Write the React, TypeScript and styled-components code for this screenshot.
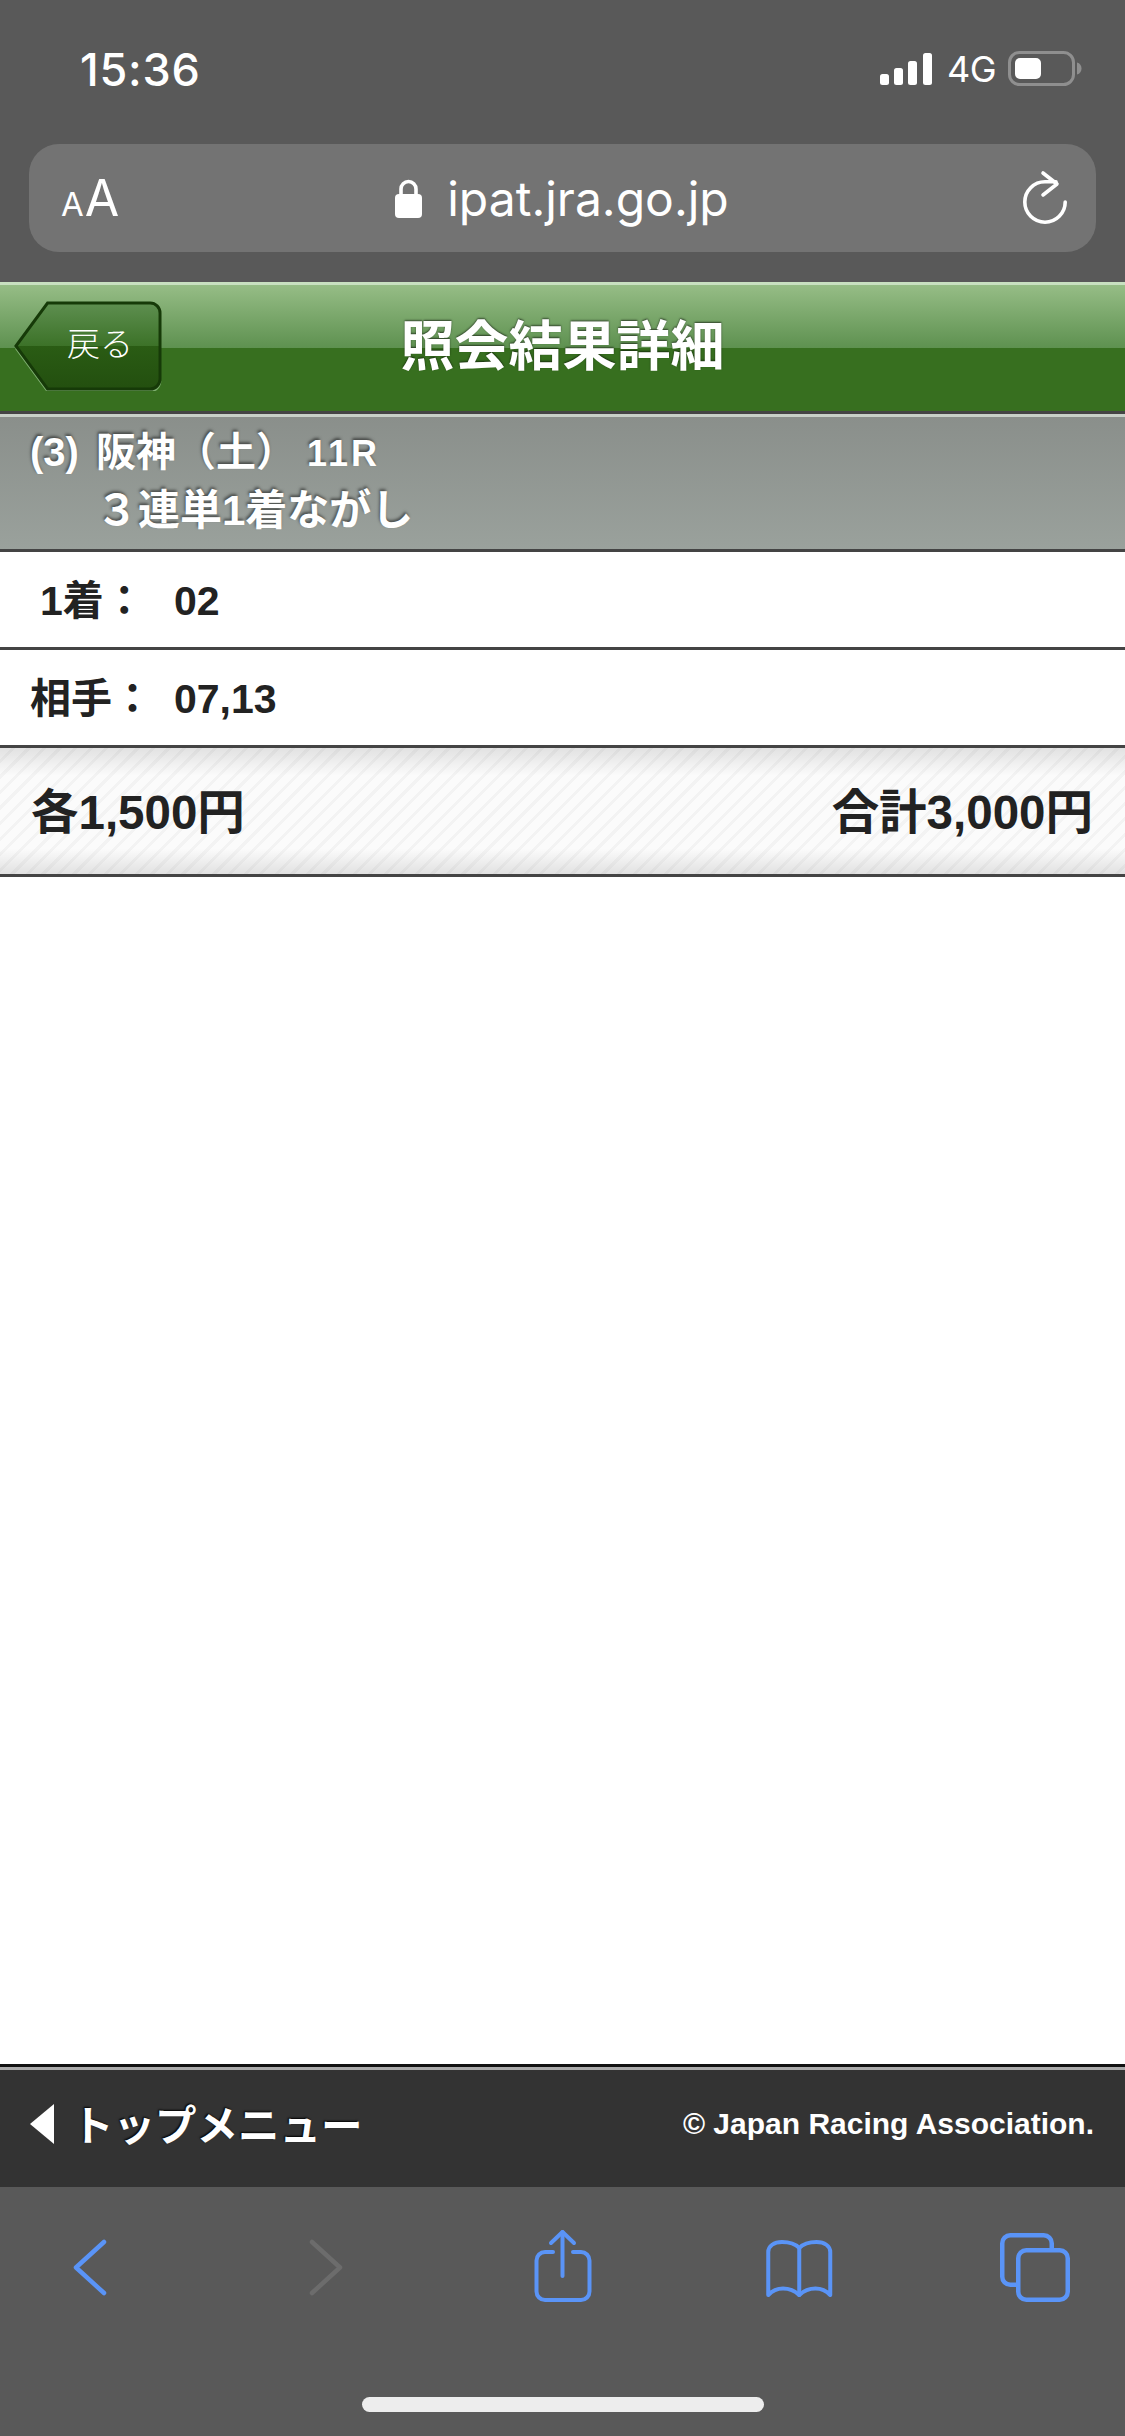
import React from 'react';
import styled, { createGlobalStyle } from 'styled-components';

const GOTHIC = `"Liberation Sans", "Noto Sans CJK JP", sans-serif`;
const SYSTEM = `Inter, "Liberation Sans", sans-serif`;
const BLUE = '#5a94f7';

const GlobalStyle = createGlobalStyle`
	html,
	body {
		margin: 0;
		padding: 0;
		background: #fff;
	}
	* {
		box-sizing: border-box;
	}
`;

const SignalIcon = () => (
	<svg width="52" height="32" viewBox="0 0 52 32" fill="#fff">
		<rect x="0" y="21" width="9" height="11" rx="2.5" />
		<rect x="14" y="15" width="9" height="17" rx="2.5" />
		<rect x="28" y="8" width="9" height="24" rx="2.5" />
		<rect x="43" y="0" width="9" height="32" rx="2.5" />
	</svg>
);

const BatteryIcon = () => (
	<svg width="74" height="36" viewBox="0 0 74 36">
		<rect x="1.5" y="1.5" width="64" height="32" rx="10" fill="none" stroke="#8f8f8f" strokeWidth="3" />
		<rect x="7" y="7" width="26" height="21" rx="5" fill="#fff" />
		<path d="M69 11.5c3 .8 4.5 3 4.5 6s-1.500 5.200-4.500 6z" fill="#8f8f8f" />
	</svg>
);

const LockIcon = () => (
	<svg width="27" height="39" viewBox="0 0 27 39" fill="#fff">
		<path d="M6 17V10a7.500 7.500 0 0 1 15 0v7" fill="none" stroke="#fff" strokeWidth="3.600" />
		<rect x="0" y="15" width="27" height="24" rx="4" />
	</svg>
);

const ReloadIcon = () => (
	<svg width="48" height="56" viewBox="0 0 48 56" fill="none" stroke="#fff" strokeWidth="3.600" strokeLinecap="round" strokeLinejoin="round">
		<path d="M42.200 32A20.200 20.200 0 1 1 22 11.800H33" />
		<path d="M20 3l14 11-14 11" />
	</svg>
);

const BackArrow = () => (
	<ToolSvg viewBox="0 0 70 76" stroke={BLUE} strokeWidth="4.500">
		<path d="M49 14L21 39.500 49 65" />
	</ToolSvg>
);

const ForwardArrow = () => (
	<ToolSvg viewBox="0 0 70 76" stroke="#6c6c6c" strokeWidth="4.500">
		<path d="M21 14l28 25.500L21 65" />
	</ToolSvg>
);

const ShareIcon = () => (
	<ToolSvg viewBox="0 0 70 76" stroke={BLUE} strokeWidth="4">
		<path d="M25 24h-8a8.500 8.500 0 0 0-8.500 8.500v31a8.500 8.500 0 0 0 8.500 8.500h36a8.500 8.500 0 0 0 8.500-8.500v-31a8.500 8.500 0 0 0-8.500-8.500h-8" />
		<path d="M34.500 4v44" />
		<path d="M23 15L34.500 4 46 15" />
	</ToolSvg>
);

const BookIcon = () => (
	<ToolSvg viewBox="0 0 70 76" stroke={BLUE} strokeWidth="4">
		<path d="M35.250 20C31 15.500 25 14 18 14 10 14 4.250 18 4.250 24v43C9 62 13 60.500 19 60.500c6 0 12 2.500 16.250 6.500 4.250-4 10.250-6.500 16.250-6.500 6 0 10 1.500 14.750 6.500V24c0-6-5.750-10-13.750-10-7 0-13 1.500-17.250 6z" />
		<path d="M35.250 20v47" />
	</ToolSvg>
);

const TabsIcon = () => (
	<ToolSvg viewBox="0 0 70 76" stroke={BLUE} strokeWidth="4.500">
		<path d="M16 56.750h-5.750a8 8 0 0 1-8-8v-33.500a8 8 0 0 1 8-8h33.500a8 8 0 0 1 8 8V20" />
		<rect x="18.250" y="22.250" width="49.500" height="49.500" rx="8" />
	</ToolSvg>
);

const App = () => (
	<Page>
		<GlobalStyle />
		<Chrome>
			<StatusBar>
				<Clock>15:36</Clock>
				<StatusIcons>
					<SignalIcon />
					<Network>4G</Network>
					<BatteryIcon />
				</StatusIcons>
			</StatusBar>
			<AddressBar>
				<ReaderButton>
					<SmallA>A</SmallA>
					<span>A</span>
				</ReaderButton>
				<Address>
					<LockIcon />
					<span>ipat.jra.go.jp</span>
				</Address>
				<ReloadIcon />
			</AddressBar>
		</Chrome>
		<Header>
			<BackButton>
				<BackShape viewBox="0 0 150 90" preserveAspectRatio="none">
					<defs>
						<linearGradient id="backFill" x1="0" y1="0" x2="0" y2="1">
							<stop offset="0" stopColor="#5e8f50" />
							<stop offset="0.5" stopColor="#3c7228" />
							<stop offset="0.5" stopColor="#2a5c14" />
							<stop offset="1" stopColor="#234f0f" />
						</linearGradient>
					</defs>
					<path d="M2 47l32 43h104a10 10 0 0 0 10-10" fill="none" stroke="#7fb070" strokeWidth="2.500" />
					<path d="M2 45L34 2h104a10 10 0 0 1 10 10v66a10 10 0 0 1-10 10H34z" fill="url(#backFill)" stroke="#163a08" strokeWidth="3" />
				</BackShape>
				<BackLabel>戻る</BackLabel>
			</BackButton>
			<Title>照会結果詳細</Title>
		</Header>
		<RaceHeader>
			<RaceLine>
				<RaceNumber>(3)</RaceNumber>
				<span>阪神（土）</span>
				<RaceName>11R</RaceName>
			</RaceLine>
			<BetType>３連単1着ながし</BetType>
		</RaceHeader>
		<PickRow>
			<PickLabel $inset>1着：</PickLabel>
			<div>02</div>
		</PickRow>
		<PickRow>
			<PickLabel>相手：</PickLabel>
			<div>07,13</div>
		</PickRow>
		<TotalRow>
			<span>各1,500円</span>
			<span>合計3,000円</span>
		</TotalRow>
		<Blank />
		<Footer>
			<TopMenu>
				<BackTriangle />
				<span>トップメニュー</span>
			</TopMenu>
			<Copyright>© Japan Racing Association.</Copyright>
		</Footer>
		<Toolbar>
			<ToolIcons>
				<BackArrow />
				<ForwardArrow />
				<ShareIcon />
				<BookIcon />
				<TabsIcon />
			</ToolIcons>
			<HomeIndicator />
		</Toolbar>
	</Page>
);

const Page = styled.div`
	width: 1125px;
	height: 2436px;
	display: flex;
	flex-direction: column;
	overflow: hidden;
	background: #fff;
	font-family: ${GOTHIC};
`;

const Chrome = styled.div`
	height: 282px;
	background: #595959;
	padding: 50px 29px 0;
	color: #fff;
	font-family: ${SYSTEM};
`;

const StatusBar = styled.div`
	height: 38px;
	display: flex;
	align-items: center;
	justify-content: space-between;
	padding: 0 14px 0 51px;
`;

const Clock = styled.div`
	font-size: 45px;
	font-weight: 500;
	letter-spacing: 0.8px;
`;

const StatusIcons = styled.div`
	display: flex;
	align-items: center;
`;

const Network = styled.div`
	width: 76px;
	padding-left: 15px;
	font-size: 36px;
	letter-spacing: -0.5px;
`;

const AddressBar = styled.div`
	height: 108px;
	margin-top: 56px;
	padding: 0 25px 0 32px;
	display: flex;
	align-items: center;
	justify-content: space-between;
	background: #737373;
	border-radius: 30px;
`;

const ReaderButton = styled.div`
	display: flex;
	align-items: baseline;
	width: 60px;
	font-size: 50px;
	line-height: 1;
`;

const SmallA = styled.span`
	font-size: 33px;
	margin-right: 1px;
`;

const Address = styled.div`
	display: flex;
	align-items: center;
	gap: 25px;
	font-size: 48px;
	margin-right: 20px;
`;

const Header = styled.div`
	height: 132px;
	display: grid;
	grid-template-columns: 1fr auto 1fr;
	align-items: center;
	padding-bottom: 10px;
	border-top: 3px solid #c8e0c0;
	border-bottom: 3px solid #444;
	background: linear-gradient(#96bd86, #5e9150 50%, #376f1f 50%, #376f1f);
`;

const BackButton = styled.div`
	position: relative;
	width: 148px;
	height: 90px;
	margin: 6px 0 0 14px;
	display: flex;
	align-items: center;
	justify-content: center;
	padding: 0 0 8px 24px;
`;

const BackShape = styled.svg`
	position: absolute;
	inset: 0;
	width: 100%;
	height: 100%;
`;

const BackLabel = styled.span`
	position: relative;
	font-family: "Noto Sans CJK JP", sans-serif;
	font-weight: 300;
	font-size: 33px;
	color: #fff;
`;

const Title = styled.h1`
	margin: 0;
	font-family: "Noto Sans CJK JP", sans-serif;
	font-weight: 700;
	font-size: 54px;
	line-height: 1;
	color: #fff;
	text-shadow: 0 -1px 2px rgba(0, 0, 0, 0.6);
`;

const RaceHeader = styled.div`
	height: 138px;
	padding: 8px 0 0 30px;
	border-top: 3px solid #c8d0c8;
	border-bottom: 3px solid #444;
	background: linear-gradient(#8a8f8b, #9aa19c);
	color: #fff;
	font-size: 40px;
	font-weight: 700;
	line-height: 54px;
	text-shadow: -1px -2px 3px rgba(0, 0, 0, 0.5);
`;

const RaceLine = styled.div`
	display: flex;
	align-items: baseline;
`;

const RaceNumber = styled.span`
	margin-right: 17px;
`;

const RaceName = styled.span`
	font-size: 36px;
	letter-spacing: 3px;
	margin-left: 11px;
`;

const BetType = styled.div`
	margin: 3px 0 0 66px;
	font-size: 42px;
`;

const PickRow = styled.div`
	height: 98px;
	padding-left: 30px;
	display: flex;
	align-items: baseline;
	border-bottom: 3px solid #444;
	font-size: 41px;
	font-weight: 700;
	line-height: 98px;
	color: #222;
`;

const PickLabel = styled.div<{ $inset?: boolean }>`
	width: 144px;
	padding-left: ${(props) => (props.$inset ? 10 : 0)}px;
`;

const TotalRow = styled.div`
	height: 129px;
	padding: 0 32px 5px 31px;
	display: flex;
	align-items: center;
	justify-content: space-between;
	border-bottom: 3px solid #444;
	font-size: 47.5px;
	font-weight: 700;
	color: #222;
	background:
		linear-gradient(rgba(0, 0, 0, 0.1), transparent 22%, transparent 80%, rgba(0, 0, 0, 0.1)),
		repeating-linear-gradient(135deg, #fbfbfb 0, #fbfbfb 8px, #f3f3f3 8px, #f3f3f3 11px);
`;

const Blank = styled.div`
	flex: 1;
	background: #fff;
`;

const Footer = styled.div`
	height: 123px;
	padding: 0 31px 6px 30px;
	display: flex;
	align-items: center;
	justify-content: space-between;
	border-top: 3px solid #111;
	background: #333;
	box-shadow: inset 0 3px 0 #aaa;
	color: #fff;
	font-weight: 700;
`;

const TopMenu = styled.div`
	display: flex;
	align-items: center;
	gap: 18px;
	font-family: "Noto Sans CJK JP", sans-serif;
	font-size: 41.5px;
	line-height: 1;
	text-shadow: -1px -1px 2px #000;
`;

const BackTriangle = styled.div`
	width: 0;
	height: 0;
	border-style: solid;
	border-width: 20px 24px 20px 0;
	border-color: transparent #fff transparent transparent;
`;

const Copyright = styled.div`
	font-size: 30px;
`;

const Toolbar = styled.div`
	height: 249px;
	padding: 41px 55px 0;
	display: flex;
	flex-direction: column;
	align-items: center;
	background: #595959;
`;

const ToolIcons = styled.div`
	width: 100%;
	height: 169px;
	display: flex;
	justify-content: space-between;
	align-items: flex-start;
`;

const ToolSvg = styled.svg`
	width: 70px;
	height: 76px;
	fill: none;
	stroke-linecap: round;
	stroke-linejoin: round;
`;

const HomeIndicator = styled.div`
	width: 402px;
	height: 15px;
	border-radius: 8px;
	background: #ededed;
`;

export default App;
